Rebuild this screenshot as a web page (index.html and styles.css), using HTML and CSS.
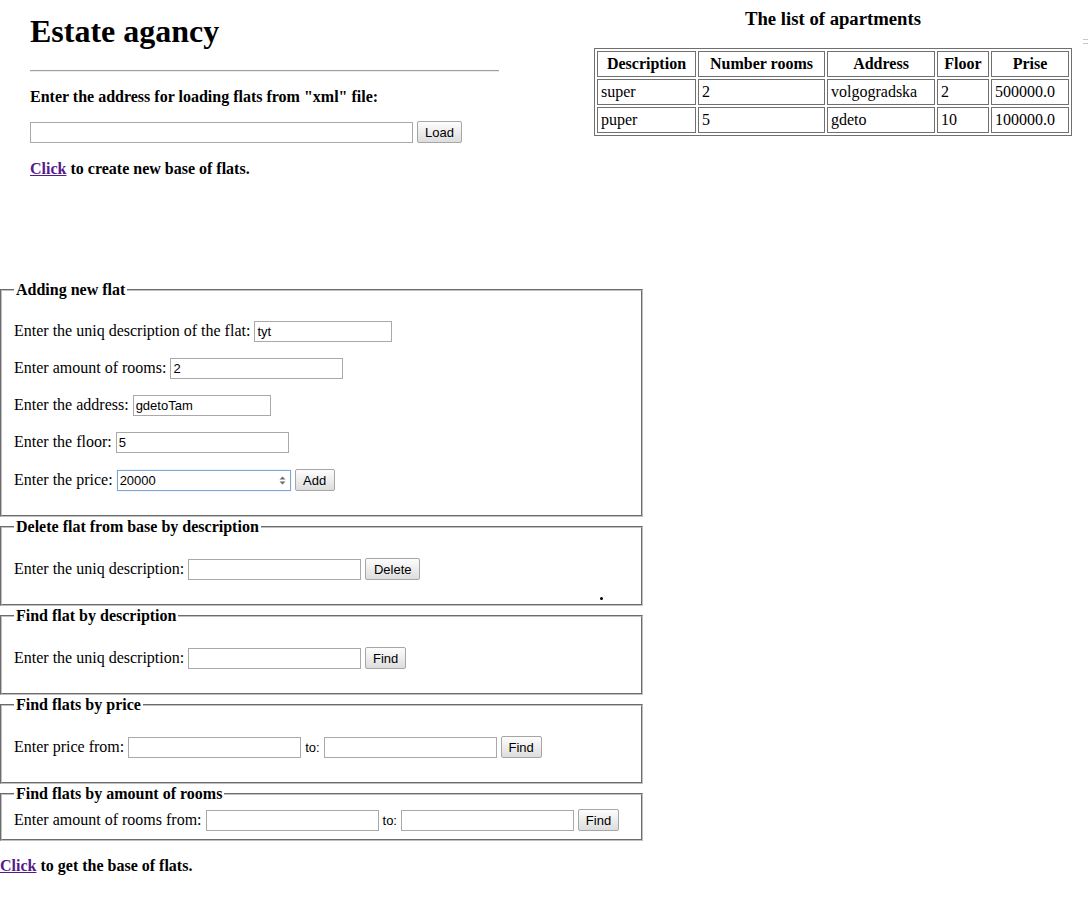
FILE: index.html
```html
<!DOCTYPE html>
<html lang="en">
<head>
<meta charset="utf-8">
<title>Estate agancy</title>
<link rel="stylesheet" href="styles.css">
</head>
<body>
<div class="top">
  <div class="intro">
    <h1 class="title">Estate agancy</h1>
    <hr class="rule">
    <p class="strong lead">Enter the address for loading flats from "xml" file:</p>
    <div class="row"><input class="field field-wide" type="text"><button class="btn btn-load" type="button">Load</button></div>
    <p class="strong last"><a class="link" href="#">Click</a> to create new base of flats.</p>
  </div>
  <div class="listing">
    <h3 class="list-title">The list of apartments</h3>
    <table class="flats">
      <thead>
        <tr><th class="c1">Description</th><th class="c2">Number rooms</th><th class="c3">Address</th><th class="c4">Floor</th><th class="c5">Prise</th></tr>
      </thead>
      <tbody>
        <tr><td>super</td><td>2</td><td>volgogradska</td><td>2</td><td>500000.0</td></tr>
        <tr><td>puper</td><td>5</td><td>gdeto</td><td>10</td><td>100000.0</td></tr>
      </tbody>
    </table>
  </div>
  <span class="edge-mark"></span>
</div>

<div class="forms">
  <fieldset class="box">
    <legend class="box-title">Adding new flat</legend>
    <p class="line">Enter the uniq description of the flat: <input class="field field-short" type="text" value="tyt"></p>
    <p class="line">Enter amount of rooms: <input class="field" type="text" value="2"></p>
    <p class="line">Enter the address: <input class="field field-short" type="text" value="gdetoTam"></p>
    <p class="line">Enter the floor: <input class="field" type="text" value="5"></p>
    <p class="line">Enter the price: <span class="spin"><input class="field field-num" type="text" value="20000"><svg class="spin-icon" width="7" height="9" viewBox="0 0 7 9"><path d="M3.5 0.5 L6.5 3.5 L0.5 3.5 Z" fill="#6b6b6b"/><path d="M0.5 5.5 L6.5 5.5 L3.5 8.5 Z" fill="#6b6b6b"/></svg></span> <button class="btn btn-add" type="button">Add</button></p>
  </fieldset>

  <fieldset class="box">
    <legend class="box-title">Delete flat from base by description</legend>
    <p class="line">Enter the uniq description: <input class="field" type="text"> <button class="btn btn-delete" type="button">Delete</button></p>
    <span class="stray-dot"></span>
  </fieldset>

  <fieldset class="box">
    <legend class="box-title">Find flat by description</legend>
    <p class="line">Enter the uniq description: <input class="field" type="text"> <button class="btn btn-find" type="button">Find</button></p>
  </fieldset>

  <fieldset class="box">
    <legend class="box-title">Find flats by price</legend>
    <p class="line">Enter price from: <input class="field" type="text"> <span class="small">to:</span> <input class="field" type="text"> <button class="btn btn-find" type="button">Find</button></p>
  </fieldset>

  <fieldset class="box">
    <legend class="box-title">Find flats by amount of rooms</legend>
    <p class="line tight">Enter amount of rooms from: <input class="field" type="text"> <span class="small">to:</span> <input class="field" type="text"> <button class="btn btn-find" type="button">Find</button></p>
  </fieldset>
</div>

<p class="strong footer"><a class="link" href="#">Click</a> to get the base of flats.</p>
</body>
</html>
```

FILE: styles.css
```css
html, body {
  margin: 0;
  padding: 0;
  background: #ffffff;
}

body {
  font-family: "Liberation Serif", "Times New Roman", serif;
  font-size: 16px;
  color: #000000;
}

.top {
  display: flex;
  align-items: flex-start;
  position: relative;
}

.intro {
  padding-left: 30px;
  width: 469px;
  flex: none;
}

.title {
  font-size: 32px;
  line-height: 37px;
  font-weight: bold;
  margin: 13px 0 20px;
}

.rule {
  margin: 0;
  height: 0;
  border: 0;
  border-top: 1px solid #a0a0a0;
  border-bottom: 1px solid #ececec;
}

.strong {
  font-weight: bold;
  line-height: 18px;
  margin: 16px 0;
}

.strong.lead {
  margin-bottom: 0;
}

.strong.last {
  margin-bottom: 0;
}

.row {
  display: flex;
  align-items: center;
  gap: 4px;
  margin: 15px 0 17px;
}

.link {
  color: #551a8b;
  text-decoration: underline;
}

.listing {
  margin-left: 95px;
  flex: none;
}

.list-title {
  font-size: 18.7px;
  line-height: 20px;
  font-weight: bold;
  text-align: center;
  margin: 9px 0 19px;
}

.flats {
  border-collapse: separate;
  border-spacing: 2px;
  border: 1px solid #707070;
}

.flats th,
.flats td {
  border: 1px solid #707070;
  padding: 3px;
  line-height: 18px;
}

.flats td {
  text-align: left;
}

.flats th {
  text-align: center;
  font-weight: bold;
}

.c1 { width: 91px; }
.c2 { width: 119px; }
.c3 { width: 100px; }
.c4 { width: 44px; }
.c5 { width: 70px; }

.edge-mark {
  position: absolute;
  top: 39px;
  right: 0;
  width: 5px;
  height: 3px;
  border-top: 1px solid #c8c8c8;
  border-bottom: 1px solid #c8c8c8;
}

.forms {
  margin-top: 102px;
}

.box {
  position: relative;
  margin: 0;
  width: 643px;
  box-sizing: border-box;
  border: 2px groove #c0c0c0;
  padding: 5px 12px 8px;
  min-width: 0;
}

.box-title {
  font-weight: bold;
  padding: 0 2px;
  line-height: 20px;
}

.line {
  margin: 16px 0;
}

.line.tight {
  margin: 0;
}

.small {
  font-family: "Liberation Sans", Arial, sans-serif;
  font-size: 13px;
}

.field {
  font-family: "Liberation Sans", Arial, sans-serif;
  font-size: 13px;
  width: 173px;
  height: 21px;
  box-sizing: border-box;
  border: 1px solid #a9a9a9;
  padding: 1px 2px;
  margin: 0;
  color: #000;
  background: #fff;
  vertical-align: baseline;
}

.field-wide {
  width: 383px;
}

.field-short {
  width: 138px;
}

.spin {
  position: relative;
  display: inline-block;
}

.field-num {
  width: 174px;
  border-color: #7ea6d6;
  box-shadow: 0 0 1px #a9c6ea;
  padding-right: 18px;
}

.spin-icon {
  position: absolute;
  right: 5px;
  top: 6px;
}

.btn {
  font-family: "Liberation Sans", Arial, sans-serif;
  font-size: 13px;
  height: 22px;
  box-sizing: border-box;
  padding: 0 6px;
  margin: 0;
  border: 1px solid #a6a6a6;
  border-radius: 2px;
  background: linear-gradient(#fdfdfd, #dddddd);
  color: #000;
  vertical-align: baseline;
}

.btn-load { width: 45px; }
.btn-add { width: 40px; }
.btn-delete { width: 55px; }
.btn-find { width: 41px; }

.stray-dot {
  position: absolute;
  right: 38px;
  bottom: 4px;
  width: 3px;
  height: 3px;
  border-radius: 50%;
  background: #000;
}

.footer {
  margin: 16px 0 0;
}
```
